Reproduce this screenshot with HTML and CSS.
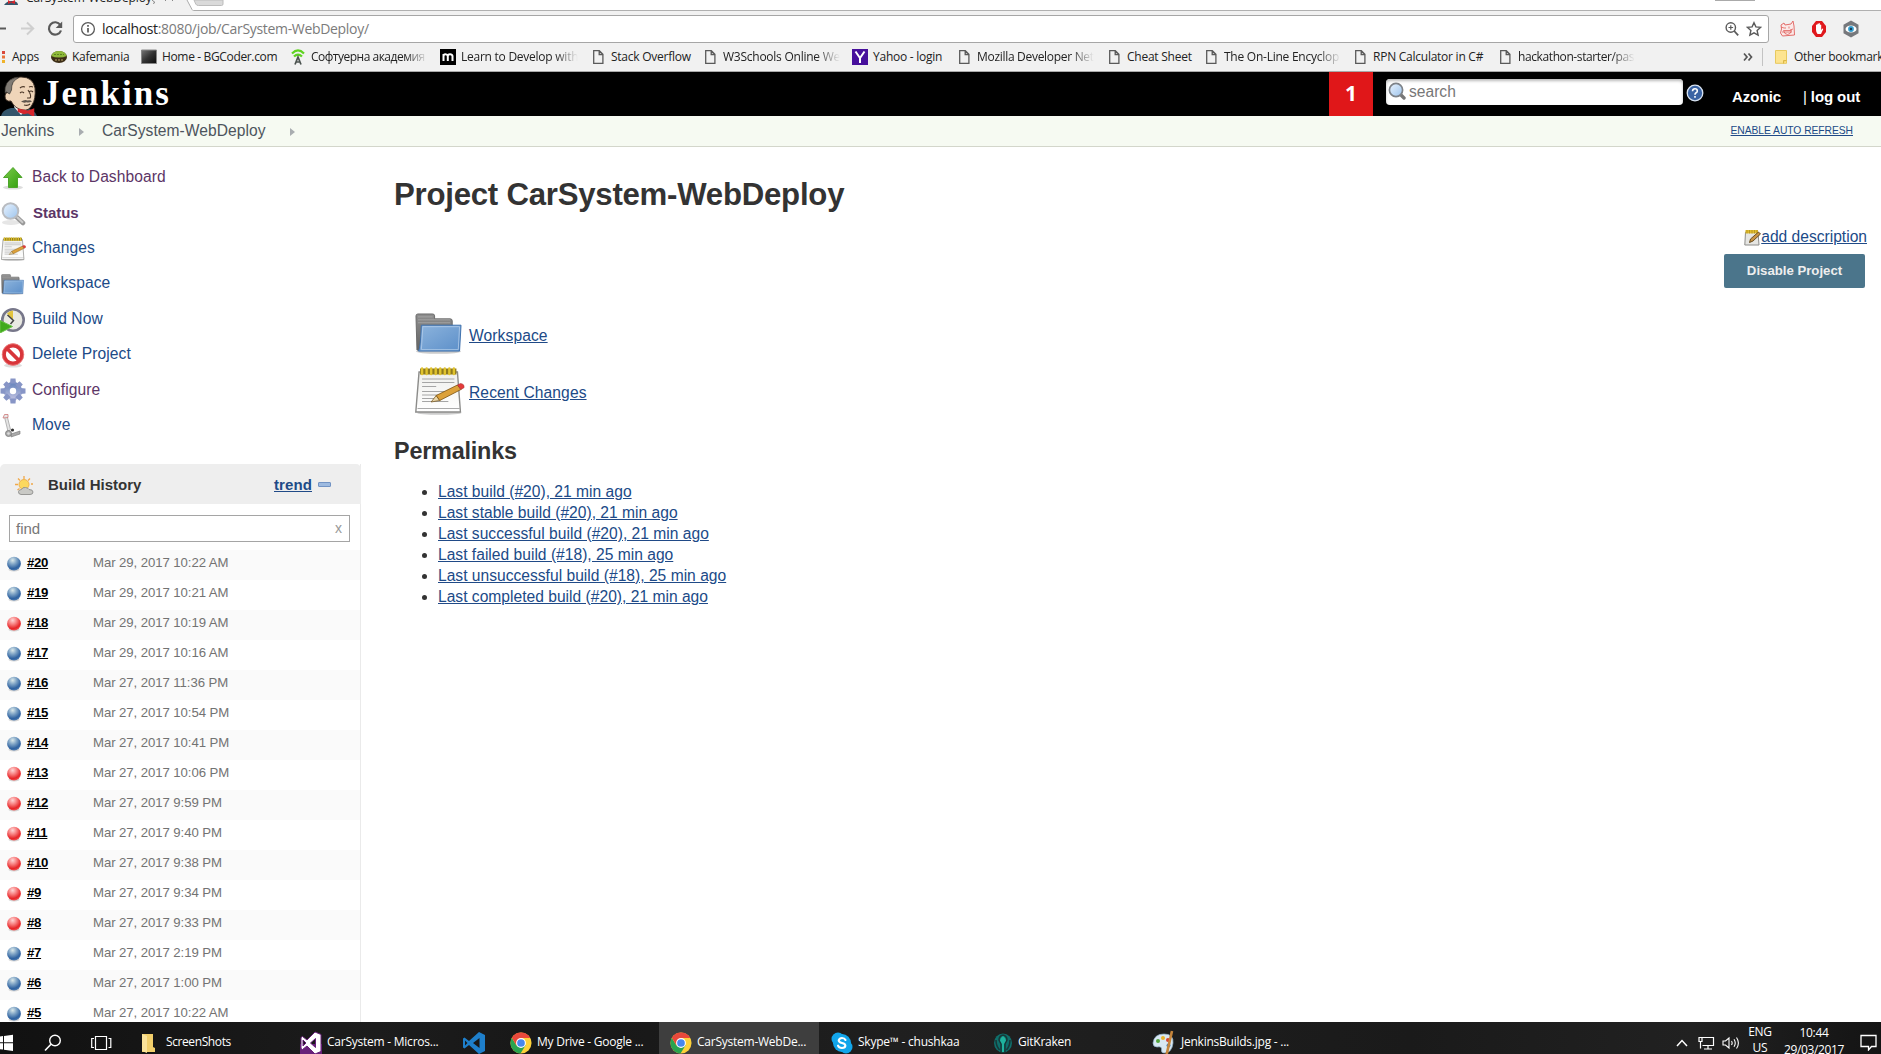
FILE: index.html
```html
<!DOCTYPE html>
<html lang="en">
<head>
<meta charset="utf-8">
<title>CarSystem-WebDeploy [Jenkins]</title>
<link rel="stylesheet" href="styles.css">
</head>
<body>
<svg class="defs" width="0" height="0" aria-hidden="true">
  <defs>
    <radialGradient id="gBlue" cx=".4" cy=".25" r=".75"><stop offset="0" stop-color="#dbe9ea"/><stop offset=".4" stop-color="#7ea3c5"/><stop offset=".8" stop-color="#2f62a0"/><stop offset="1" stop-color="#4a78ae"/></radialGradient>
    <radialGradient id="gRed" cx=".4" cy=".25" r=".75"><stop offset="0" stop-color="#ffd6d6"/><stop offset=".4" stop-color="#f78080"/><stop offset=".8" stop-color="#e62528"/><stop offset="1" stop-color="#ee5050"/></radialGradient>
    <linearGradient id="gFolder" x1="0" y1="0" x2="1" y2="1"><stop offset="0" stop-color="#8db4dd"/><stop offset="1" stop-color="#5c8fc9"/></linearGradient>
    <linearGradient id="gGray" x1="0" y1="0" x2="0" y2="1"><stop offset="0" stop-color="#8e8e8e"/><stop offset="1" stop-color="#636363"/></linearGradient>
    <linearGradient id="gGreen" x1="0" y1="0" x2="1" y2="1"><stop offset="0" stop-color="#7ccb4a"/><stop offset="1" stop-color="#2f9d0c"/></linearGradient>
    <linearGradient id="gLens" x1="0" y1="0" x2="1" y2="1"><stop offset="0" stop-color="#eaf4ff"/><stop offset="1" stop-color="#9cc3ec"/></linearGradient>
    <linearGradient id="gPaper" x1="0" y1="0" x2="0" y2="1"><stop offset="0" stop-color="#efefec"/><stop offset="1" stop-color="#fff"/></linearGradient>
    <linearGradient id="gGear" x1="0" y1="0" x2="0" y2="1"><stop offset="0" stop-color="#6f8ac0"/><stop offset="1" stop-color="#b4b9dc"/></linearGradient>
    <linearGradient id="gScreen" x1="0" y1="0" x2="1" y2="1"><stop offset="0" stop-color="#777"/><stop offset=".5" stop-color="#333"/><stop offset="1" stop-color="#0c0c0c"/></linearGradient>
    <symbol id="doc" viewBox="0 0 16 16"><path d="M3.7 1.7h5.6l3.6 3.6v9H3.7zM9.2 2v3.5h3.5" fill="none" stroke="#5a5a5a" stroke-width="1.3"/></symbol>
    <symbol id="ballBlue" viewBox="0 0 16 16"><ellipse cx="8" cy="13.6" rx="5.5" ry="1.8" fill="#bbb" opacity=".6"/><circle cx="8" cy="7.7" r="6.9" fill="url(#gBlue)"/></symbol>
    <symbol id="ballRed" viewBox="0 0 16 16"><ellipse cx="8" cy="13.6" rx="5.5" ry="1.8" fill="#bbb" opacity=".6"/><circle cx="8" cy="7.7" r="6.9" fill="url(#gRed)"/></symbol>
    <symbol id="folder" viewBox="0 0 48 42" preserveAspectRatio="none">
      <ellipse cx="24" cy="39.500" rx="23" ry="2.300" fill="#ccc"/>
      <path d="M1 3q0-2 2-2h15q2 0 2 2v3h16q2 0 2 2v30H2z" fill="url(#gGray)" stroke="#6a6a6a"/>
      <path d="M3 4h15M3 7h33M3 10h33" stroke="#aaa" stroke-width=".8"/>
      <path d="M6.500 12.500h40.500l-1.500 26.500h-42q2-2 3-26.500z" fill="url(#gFolder)" stroke="#3d70ac"/>
      <path d="M8 14h37.500l-1.300 23.500H6.500z" fill="none" stroke="#b3cdea" stroke-width=".8"/>
    </symbol>
    <symbol id="notepad" viewBox="0 0 49 48" preserveAspectRatio="none">
      <ellipse cx="24" cy="46" rx="22" ry="1.800" fill="#ccc"/>
      <path d="M4 5h38l3 40H.8z" fill="url(#gPaper)" stroke="#8c8c8a" stroke-width="1.4"/>
      <path d="M2.500 41.500h42" stroke="#aaa"/>
      <path d="M7 12h32M7 15.500h32M7 19.500h14M7 24.500h24M7 28h18M7 31.500h14M7 34.500h26" stroke="#a5a5a5"/>
      <path d="M5 4.500h36" stroke="#8f7a1c" stroke-width="6"/>
      <path d="M7 1.500v5.500M11.500 1.500v5.500M16 1.500v5.500M20.500 1.500v5.500M25 1.500v5.500M29.500 1.500v5.500M34 1.500v5.500M38.500 1.500v5.500" stroke="#e0c32e" stroke-width="2.400" stroke-linecap="round"/>
      <path d="M16 35l5-6.500 3.500 5z" fill="#ead6a8" stroke="#6b4a12" stroke-width=".7"/>
      <path d="M21 28.500l21-10.500 3.500 4.500-21 11z" fill="#dca13a" stroke="#7c5210" stroke-width=".8"/>
      <path d="M42 18l3-1.500q4 .5 3.800 4l-3.300 2z" fill="#e43b3b" stroke="#a33" stroke-width=".6"/>
    </symbol>
    <symbol id="chrome" viewBox="0 0 24 24">
      <circle cx="12" cy="12" r="11.500" fill="#fdd13a"/>
      <path d="M2 6.300A11.500 11.500 0 0 0 11.500 23.500L17 14.500 12 12 7 14.600z" fill="#2aa350"/>
      <path d="M12 6.500h10.100a11.500 11.500 0 0 0-20.100-.2L7 14.500 12 12z" fill="#e8483b"/>
      <circle cx="12" cy="12" r="5.400" fill="#fff"/><circle cx="12" cy="12" r="4.200" fill="#4787ee"/>
    </symbol>
    <symbol id="butler" viewBox="0 0 36 40">
      <path d="M0 40q1-6 10-8l15 0q9 2 11 8z" fill="#33566b"/>
      <path d="M13 31l7 8 7-7-2-5H14z" fill="#f4f4f4"/>
      <path d="M5 13Q6 1 20 1q12 0 14 11 1 11-3 17-3 6-9 5-8-1-12-9-6 1-6-5 0-3 3-4z" fill="#efd5b9" stroke="#3b2d22" stroke-width=".9"/>
      <path d="M4 17Q3 5 13 2q3-1 5-.5Q10 5 10.500 14l-2 4-3-2z" fill="#807b74" stroke="#33302c" stroke-width=".7"/>
      <path d="M19 17q2-2 4 0M28 16q2-2 4 0M19 12q2-2 5-1M28 11q2-1 4 0M27 14q4 6 2 8l-3 0M23 29q4 1 6-1" fill="none" stroke="#493526" stroke-width="1.100"/>
      <path d="M20 25.500q4-2.500 6.500-1 2.500-1 4.500 1-3 1.500-5.500.8-3 1-5.500-.8z" fill="#5e554d"/>
      <path d="M18 35l5 2 4-1 5 3v-5l-5 2-4-1-5-1z" fill="#d6262c" stroke="#d6262c" stroke-width="2.500"/>
    </symbol>
  </defs>
</svg>

<div class="tabs">
  <svg class="tab-shape" width="240" height="11" viewBox="0 0 240 11">
    <path d="M0 0H187l5 10H240V11H0z" fill="#f1f1f1"/>
    <path d="M187 0l5 9.500q.5 1 1.500 1H240" fill="none" stroke="#ababab"/>
    <path d="M194 0h29v4q0 1.500-1.500 1.500h-23q-2 0-2.800-1.500z" fill="#dadada" stroke="#bcbcbc"/>
    <path d="M4 5q3-4 7-4h3q4 1 4 4z" fill="#33566b"/><path d="M8 0l3 2 4-2v4l-4-1.500L8 4z" fill="#d6262c"/>
    <path d="M152 0l3 2.500-2 1M165 1l2-2M171-1l2 2" fill="none" stroke="#888"/>
  </svg>
  <span class="tab-title">CarSystem-WebDeploy</span>
  <i class="win-btn"></i>
</div>

<div class="toolbar">
  <svg class="nav-icons" width="73" height="30" viewBox="0 0 73 30">
    <path d="M0 14.500h6" stroke="#5a5a5a" stroke-width="2"/>
    <path d="M21 14.500h12M27 8.500l6.200 6-6.200 6" fill="none" stroke="#cfcfcf" stroke-width="2"/>
    <path d="M60.300 11A6.200 6.200 0 1 0 61 16.500" fill="none" stroke="#5a5a5a" stroke-width="2.200"/><path d="M62.200 7.500v6.500h-6.500z" fill="#5a5a5a"/>
  </svg>
  <div class="omnibox">
    <svg width="16" height="16" viewBox="0 0 16 16"><circle cx="8" cy="8" r="6.400" fill="none" stroke="#5a5a5a" stroke-width="1.300"/><path d="M8 7v4.500M8 4v1.800" stroke="#5a5a5a" stroke-width="1.700"/></svg>
    <span class="url"><b>localhost</b>:8080/job/CarSystem-WebDeploy/</span>
    <svg class="push" width="16" height="16" viewBox="0 0 16 16"><circle cx="6.800" cy="6.500" r="4.700" fill="none" stroke="#5a5a5a" stroke-width="1.400"/><path d="M4.500 6.500h4.600M6.800 4.200v4.600" stroke="#5a5a5a" stroke-width="1.200"/><path d="M10.200 10l4 4.300" stroke="#5a5a5a" stroke-width="1.800"/></svg>
    <svg class="star" width="16" height="16" viewBox="0 0 16 16"><path d="M8 1.700l1.900 4.200 4.600.5-3.400 3.100 1 4.600L8 11.800l-4.100 2.300 1-4.600L1.500 6.400l4.600-.5z" fill="none" stroke="#5a5a5a" stroke-width="1.400"/></svg>
  </div>
  <svg class="ext" width="17" height="18" viewBox="0 0 17 18"><path d="M2 5l3-2 1 2 6-1 2-3 1 5 .5 9-12 1-2-3 1-4z" fill="#fbe9e8" stroke="#e0605c" stroke-width=".9"/><path d="M6 7v2M10 6.500v2M4.500 10.500h8q-1 4-4 4t-4-4zM3 12l10 0M2 7l3 1M11 10l3-1" fill="none" stroke="#e0605c" stroke-width=".8"/></svg>
  <svg class="ext" width="16" height="18" viewBox="0 0 16 18"><path d="M5 1h6l4 5v6l-4 5H5l-4-5V6z" fill="#e0191d"/><path d="M5 8V5q.8-1 1.300 0V4q.8-1 1.300 0v-.5q.8-1 1.300 0V5q.8-1 1.300 0v5l1.300-1.500q1 0 .6 1L10 14H6.500Q5 12 5 10z" fill="#fff"/></svg>
  <svg class="ext" width="18" height="18" viewBox="0 0 18 18"><path d="M9 .5l7.500 4.300v8.400L9 17.500l-7.500-4.300V4.800z" fill="#76787c"/><ellipse cx="9" cy="9" rx="5.500" ry="3.600" fill="#fff"/><circle cx="9" cy="9" r="2.900" fill="#35a0d2"/><circle cx="9" cy="9" r="1.200" fill="#173a55"/></svg>
</div>

<div class="bookmarks">
  <span class="bm apps"><svg width="6" height="16" viewBox="0 0 6 16"><path d="M2 2h3v3H2z" fill="#d9483b"/><path d="M2 6.500h3v3H2z" fill="#e8733a"/><path d="M2 11h3v3H2z" fill="#efb32b"/></svg><span>Apps</span></span>
  <span class="bm"><svg width="16" height="16" viewBox="0 0 16 16"><ellipse cx="8" cy="8" rx="8" ry="6" fill="#3c2d16"/><path d="M.3 7Q2 2 8 2t7.700 5q-3 1.500-7.700 1.500T.3 7z" fill="#8fb93a"/><path d="M3 5.500h10" stroke="#5c8320" stroke-dasharray="2 1"/><path d="M4 11h8" stroke="#b9a66b" stroke-dasharray="2 1"/></svg><span>Kafemania</span></span>
  <span class="bm"><svg width="16" height="16" viewBox="0 0 16 16"><path d="M.5 1h15v13.500H.5z" fill="url(#gScreen)" stroke="#888"/></svg><span class="w-home">Home - BGCoder.com</span></span>
  <span class="bm"><svg width="16" height="16" viewBox="0 0 16 16"><path d="M2 4.500q6-6 12 0M4 7.500q4-4 8 0" fill="none" stroke="#5fd321" stroke-width="2.200"/><path d="M5 15.500l3-7.500 3 7.500M6 13h4" fill="none" stroke="#4c5350" stroke-width="1.700"/></svg><span class="fade w-soft">Софтуерна академия</span></span>
  <span class="bm"><svg width="16" height="16" viewBox="0 0 16 16"><path d="M0 0h16v16H0z"/><path d="M3.500 12V5M3.500 7q0-1.700 2-1.700T7.800 7v5M7.800 7q0-1.700 2.200-1.700T12.500 7v5" fill="none" stroke="#fff" stroke-width="2"/></svg><span class="fade">Learn to Develop with</span></span>
  <span class="bm"><svg width="16" height="16"><use href="#doc"/></svg><span>Stack Overflow</span></span>
  <span class="bm"><svg width="16" height="16"><use href="#doc"/></svg><span class="fade w-w3">W3Schools Online We</span></span>
  <span class="bm"><svg width="16" height="16" viewBox="0 0 16 16"><path d="M0 0h16v16H0z" fill="#47109c"/><path d="M3.500 2.500L8 9l4.500-6.500M8 9v5" fill="none" stroke="#fff" stroke-width="2"/></svg><span>Yahoo - login</span></span>
  <span class="bm"><svg width="16" height="16"><use href="#doc"/></svg><span class="fade w-moz">Mozilla Developer Net</span></span>
  <span class="bm"><svg width="16" height="16"><use href="#doc"/></svg><span>Cheat Sheet</span></span>
  <span class="bm"><svg width="16" height="16"><use href="#doc"/></svg><span class="fade">The On-Line Encyclop</span></span>
  <span class="bm"><svg width="16" height="16"><use href="#doc"/></svg><span>RPN Calculator in C#</span></span>
  <span class="bm"><svg width="16" height="16"><use href="#doc"/></svg><span class="fade w-hack">hackathon-starter/pas</span></span>
  <span class="more"><svg width="10" height="10" viewBox="0 0 10 10"><path d="M1 1.500L4 5 1 8.500M5.500 1.500l3 3.500-3 3.500" fill="none" stroke="#555" stroke-width="1.700"/></svg></span>
  <span class="bm other"><svg width="12" height="16" viewBox="0 0 12 16"><path d="M.5 1.500h11v12.800H.5z" fill="#fde490" stroke="#e8c95e"/><path d="M8.500 14.500v-3h3" fill="#f6d469" stroke="#dcb94a"/></svg><span>Other bookmarks</span></span>
</div>

<header class="jheader">
  <svg class="mascot" width="36" height="40"><use href="#butler"/></svg>
  <span class="brand">Jenkins</span>
  <span class="alert">1</span>
  <div class="search">
    <svg width="18" height="18" viewBox="0 0 18 18"><path d="M11.500 11.500l4.500 4.500" stroke="#777" stroke-width="3.400" stroke-linecap="round"/><circle cx="8" cy="8" r="6.600" fill="url(#gLens)" stroke="#7d8288" stroke-width="1.700"/></svg>
    <span>search</span>
  </div>
  <svg class="help" width="18" height="18" viewBox="0 0 18 18"><circle cx="9" cy="9" r="7.800" fill="#3b64a4" stroke="#d9e4f2" stroke-width="1.300"/><path d="M6.500 7.200Q6.700 4.800 9 4.800t2.300 2.100q0 1.200-1.200 1.900T9 10.700M9 12v1.700" fill="none" stroke="#fff" stroke-width="1.600"/></svg>
  <span class="user">Azonic</span>
  <span class="logout"><i>|</i> log out</span>
</header>

<nav class="crumbs">
  <span class="c1">Jenkins</span><i class="tri"></i><span class="c2">CarSystem-WebDeploy</span><i class="tri"></i>
  <a class="refresh">ENABLE AUTO REFRESH</a>
</nav>

<div class="page">
  <aside class="side">
    <ul class="tasks">
      <li class="visited"><svg width="26" height="26" viewBox="0 0 26 26"><ellipse cx="13" cy="22.500" rx="10" ry="2" fill="#ddd"/><path d="M13 2.500l9 10h-4.500v10h-9v-10H3.500z" fill="url(#gGreen)" stroke="#4da52a"/></svg>Back to Dashboard</li>
      <li class="current"><svg width="26" height="26" viewBox="0 0 26 26"><ellipse cx="11" cy="21.500" rx="9" ry="2.500" fill="#e6e6e6"/><path d="M16 15.500l7 6.500" stroke="#999" stroke-width="4.500" stroke-linecap="round"/><path d="M17 16l6 5.700" stroke="#ccc" stroke-width="2"/><circle cx="10.500" cy="10" r="7.800" fill="url(#gLens)" stroke="#b9bcc1" stroke-width="2"/></svg>Status</li>
      <li><svg width="26" height="26"><use href="#notepad" x="1" y="1" width="25" height="24"/></svg>Changes</li>
      <li><svg width="26" height="26"><use href="#folder" x="1" y="3" width="23" height="21"/></svg>Workspace</li>
      <li><svg width="26" height="26" viewBox="0 0 26 26"><circle cx="13" cy="13" r="10.700" fill="#e9e9e2" stroke="#77778a" stroke-width="2.600"/><path d="M13 13L7 6.500q3-3 6-3z" fill="#e2c43e"/><path d="M7.500 8l6 5.500-3 3.500" fill="none" stroke="#444" stroke-width="1.500"/><path d="M0 13.500l12.500 6L0 26z" fill="#40aa1c" stroke="#69c246"/></svg>Build Now</li>
      <li><svg width="26" height="26" viewBox="0 0 26 26"><ellipse cx="13" cy="23.500" rx="9" ry="2" fill="#ddd"/><circle cx="13" cy="12.500" r="9" fill="#fff" stroke="#d8353a" stroke-width="3.800"/><path d="M7 6.500l12 12" stroke="#d8353a" stroke-width="3.800"/><circle cx="13" cy="12.500" r="10.800" fill="none" stroke="#ee8080" stroke-width=".8"/></svg>Delete Project</li>
      <li class="visited"><svg width="26" height="26" viewBox="0 0 26 26"><circle cx="13" cy="13" r="6.200" fill="none" stroke="url(#gGear)" stroke-width="6"/><path d="M10.500 .5h5l.5 5h-6zM10.500 25.500h5l.5-5h-6zM.5 10.500v5l5 .5v-6zM25.500 10.500v5l-5 .5v-6zM3.200 6.600L6.400 3.200l4.400 3.600-4 4zM22.800 6.600L19.600 3.200l-4.400 3.600 4 4zM3.200 19.400L6.400 22.800l4.400-3.600-4-4zM22.800 19.400L19.600 22.800l-4.400-3.600 4-4z" fill="#8795c6"/></svg>Configure</li>
      <li><svg width="26" height="26" viewBox="0 0 26 26"><path d="M11 21l9-3v3l-9 3z" fill="#aaa" stroke="#777" stroke-width=".6"/><path d="M4.500 4l2.500-1.500 3.500 14-2.500 2z" fill="#e4e4e4" stroke="#999" stroke-width=".7"/><path d="M3 5l1.500-3.500L8 1.500v3z" fill="#e8eaea" stroke="#c77" stroke-width=".8"/><circle cx="8.500" cy="20.500" r="3" fill="#aaa" stroke="#777" stroke-width=".8"/><circle cx="8.500" cy="20.500" r="1.300" fill="#ddd"/><circle cx="12.500" cy="17" r="1.600" fill="#333"/></svg>Move</li>
    </ul>

    <section class="history">
      <header class="history-head">
        <svg width="20" height="20" viewBox="0 0 20 20"><path d="M9 0v3M3 2.500l2 2M15 2.500l-2 2M0 8.500h3M16 8h2M2.500 14l2-1.500" stroke="#f0a84a" stroke-width="1.300"/><circle cx="9" cy="8.500" r="5" fill="#fbd85e" stroke="#f0b24c"/><path d="M6 18.500q-3-.5-2.500-3 .5-2 3-2 1-2.500 4-2t3.500 2q4 0 4 2.500t-3 2.500z" fill="#c9c9c5" stroke="#8f8f8d" stroke-width=".9"/></svg>
        <b>Build History</b>
        <a>trend</a>
        <i class="collapse"></i>
      </header>
      <div class="find"><span>find</span><span class="clear">x</span></div>
      <ul class="builds">
        <li><svg width="16" height="16"><use href="#ballBlue"/></svg><a>#20</a><span>Mar 29, 2017 10:22 AM</span></li>
        <li><svg width="16" height="16"><use href="#ballBlue"/></svg><a>#19</a><span>Mar 29, 2017 10:21 AM</span></li>
        <li><svg width="16" height="16"><use href="#ballRed"/></svg><a>#18</a><span>Mar 29, 2017 10:19 AM</span></li>
        <li><svg width="16" height="16"><use href="#ballBlue"/></svg><a>#17</a><span>Mar 29, 2017 10:16 AM</span></li>
        <li><svg width="16" height="16"><use href="#ballBlue"/></svg><a>#16</a><span>Mar 27, 2017 11:36 PM</span></li>
        <li><svg width="16" height="16"><use href="#ballBlue"/></svg><a>#15</a><span>Mar 27, 2017 10:54 PM</span></li>
        <li><svg width="16" height="16"><use href="#ballBlue"/></svg><a>#14</a><span>Mar 27, 2017 10:41 PM</span></li>
        <li><svg width="16" height="16"><use href="#ballRed"/></svg><a>#13</a><span>Mar 27, 2017 10:06 PM</span></li>
        <li><svg width="16" height="16"><use href="#ballRed"/></svg><a>#12</a><span>Mar 27, 2017 9:59 PM</span></li>
        <li><svg width="16" height="16"><use href="#ballRed"/></svg><a>#11</a><span>Mar 27, 2017 9:40 PM</span></li>
        <li><svg width="16" height="16"><use href="#ballRed"/></svg><a>#10</a><span>Mar 27, 2017 9:38 PM</span></li>
        <li><svg width="16" height="16"><use href="#ballRed"/></svg><a>#9</a><span>Mar 27, 2017 9:34 PM</span></li>
        <li><svg width="16" height="16"><use href="#ballRed"/></svg><a>#8</a><span>Mar 27, 2017 9:33 PM</span></li>
        <li><svg width="16" height="16"><use href="#ballBlue"/></svg><a>#7</a><span>Mar 27, 2017 2:19 PM</span></li>
        <li><svg width="16" height="16"><use href="#ballBlue"/></svg><a>#6</a><span>Mar 27, 2017 1:00 PM</span></li>
        <li><svg width="16" height="16"><use href="#ballBlue"/></svg><a>#5</a><span>Mar 27, 2017 10:22 AM</span></li>
      </ul>
    </section>
  </aside>

  <main class="main">
    <h1>Project CarSystem-WebDeploy</h1>
    <div class="actions">
      <span class="describe"><svg width="17" height="17" viewBox="0 0 17 17"><path d="M1.500 3h12.500l1 13H.8z" fill="#e6e6e3" stroke="#8c8c8a"/><path d="M1.500 2.700h12.500" stroke="#e0bd2e" stroke-width="3.400"/><path d="M3 1v3.500M5.500 1v3.500M8 1v3.500M10.500 1v3.500M13 1v3.500" stroke="#a98a1c" stroke-width=".7"/><path d="M5.500 13.500l1-3.500 8-7 2 2-7.500 7z" fill="#c89445" stroke="#5f4418" stroke-width=".9"/></svg><a>add description</a></span>
      <button class="disable">Disable Project</button>
    </div>
    <div class="quick"><svg width="50" height="48"><use href="#folder" width="47" height="41" y="3"/></svg><a>Workspace</a></div>
    <div class="quick second"><svg width="50" height="48"><use href="#notepad" width="49.500" height="48"/></svg><a>Recent Changes</a></div>
    <h2>Permalinks</h2>
    <ul class="permalinks">
      <li><a>Last build (#20), 21 min ago</a></li>
      <li><a>Last stable build (#20), 21 min ago</a></li>
      <li><a>Last successful build (#20), 21 min ago</a></li>
      <li><a>Last failed build (#18), 25 min ago</a></li>
      <li><a>Last unsuccessful build (#18), 25 min ago</a></li>
      <li><a>Last completed build (#20), 21 min ago</a></li>
    </ul>
  </main>
</div>

<footer class="taskbar">
  <span class="tb"><svg width="14" height="18" viewBox="0 0 14 18"><path d="M0 2.500l3-.4v6.200H0zM4 2l9-1.300v7.600H4zM0 9.300h3v6.300l-3-.4zM4 9.300h9V17l-9-1.300z" fill="#fff"/></svg></span>
  <span class="tb"><svg width="18" height="18" viewBox="0 0 18 18"><circle cx="11" cy="6.500" r="5.300" fill="none" stroke="#fff" stroke-width="1.400"/><path d="M7 10.300L1 16.500" stroke="#fff" stroke-width="1.600"/></svg></span>
  <span class="tb"><svg width="21" height="16" viewBox="0 0 21 16"><path d="M4.500 1.500h11v13h-11zM3 3.500H.7v9H3M17.500 3.500h2.300v9h-2.300" fill="none" stroke="#fff" stroke-width="1.200"/></svg></span>
  <span class="tb"><svg width="15" height="20" viewBox="0 0 15 20"><path d="M1 1h11v13l2 1v4H1z" fill="#f2cf6b"/><path d="M1 1l5 2v17l-5-2z" fill="#fbe39a"/></svg><span class="l-ss">ScreenShots</span></span>
  <span class="tb"><svg width="22" height="24" viewBox="0 0 22 24"><path d="M0 13h22v11H0z" fill="#68217a"/><path d="M15 1l6 2.500v17L15 23l-8-8-4.500 3.500L1 17.500v-11L2.500 5.500 7 9zM15.500 7.500L10.500 12l5 4.500zM3 9v6l3-3z" fill="#fff" stroke="#68217a" stroke-width="1" fill-rule="evenodd"/></svg><span>CarSystem - Micros...</span></span>
  <span class="tb"><svg width="24" height="24" viewBox="0 0 24 24"><path d="M17 1l6 3v16l-6 3-10-9-4.500 3.500L1 16.500v-9L2.500 6.500 7 10zM17.500 7l-6.500 5 6.500 5zM3 9.500v5L5.500 12z" fill="#1e7fcb" fill-rule="evenodd"/></svg></span>
  <span class="tb"><svg width="22" height="22"><use href="#chrome"/></svg><span>My Drive - Google ...</span></span>
  <span class="tb active"><svg width="22" height="22"><use href="#chrome"/></svg><span>CarSystem-WebDe...</span></span>
  <span class="tb"><svg width="22" height="22" viewBox="0 0 22 22"><circle cx="7" cy="7" r="6.500" fill="#12a5ea"/><circle cx="15" cy="15" r="6.500" fill="#12a5ea"/><circle cx="11" cy="11" r="9" fill="#12a5ea"/><path d="M14.500 8Q13.500 6 11 6T7.700 8.300q0 2 3.300 2.700t3.400 2.700Q14.200 16 11 16t-4-2.300" fill="none" stroke="#fff" stroke-width="2.100" stroke-linecap="round"/></svg><span>Skype™ - chushkaa</span></span>
  <span class="tb"><svg width="20" height="22" viewBox="0 0 20 22"><ellipse cx="10" cy="11" rx="9" ry="9.500" fill="#0f6f6b"/><path d="M10 3q4 1 4 5l-2 4v8M10 3Q6 4 6 8l2 4v8M3 8q0 6 3.500 10M17 8q0 6-3.500 10" fill="none" stroke="#173838" stroke-width="1.500"/><path d="M10 4q3 2 3 4.500L11 12v8H9v-8L7 8.500Q7 6 10 4z" fill="#1fb39e"/></svg><span>GitKraken</span></span>
  <span class="tb"><svg width="24" height="26" viewBox="0 0 24 26"><path d="M12 4q10 0 9 9-1 10-9 10-3 0-2.500-3.500T5 17q-4 0-4-4 1-9 11-9z" fill="#d9e8f3" stroke="#8fb1c9" stroke-width=".7"/><circle cx="6" cy="11" r="2" fill="#52a43c"/><circle cx="11" cy="8" r="2" fill="#e9b52d"/><circle cx="16" cy="10" r="2" fill="#d64334"/><circle cx="16.500" cy="15.500" r="2" fill="#3778c0"/><path d="M20 1l-5.500 24" stroke="#c6853b" stroke-width="2.600"/></svg><span>JenkinsBuilds.jpg - ...</span></span>
  <span class="tb tray">
    <svg width="12" height="8" viewBox="0 0 12 8"><path d="M1 7l5-5.500L11 7" fill="none" stroke="#fff" stroke-width="1.500"/></svg>
    <svg width="17" height="14" viewBox="0 0 17 14"><path d="M4.500 1.500h11v8h-11M10 9.500V13M6 13h8M1 1.500h3v4H1zM2.500 5.500v7" fill="none" stroke="#fff" stroke-width="1.200"/></svg>
    <svg class="speaker" width="18" height="14" viewBox="0 0 18 14"><path d="M1 5h2.500L7 2v10L3.500 9H1zM9.500 5q1.300 2 0 4M12 3.200q2.500 3.800 0 7.600M14.500 1.500q3.800 5.500 0 11" fill="none" stroke="#fff" stroke-width="1.100"/></svg>
  </span>
  <span class="two-line lang"><span>ENG</span><span>US</span></span>
  <span class="two-line clock"><span>10:44</span><span>29/03/2017</span></span>
  <span class="tb note"><svg width="17" height="17" viewBox="0 0 17 17"><path d="M1 1.500h15v11h-4.500L8.500 16v-3.500H1z" fill="none" stroke="#fff" stroke-width="1.300"/></svg></span>
</footer>
</body>
</html>
```
FILE: styles.css
```css
* { box-sizing: border-box; }
body {
  margin: 0;
  width: 1881px;
  height: 1054px;
  overflow: hidden;
  display: flex;
  flex-direction: column;
  background: #fff;
  color: #333;
  font: 15.6px/21px "Liberation Sans", Arial, sans-serif;
}
ul { margin: 0; padding: 0; list-style: none; }
svg { display: block; flex: none; }
.defs { position: absolute; }

/* Browser chrome */
.tabs {
  position: relative;
  flex: none;
  height: 11px;
  overflow: hidden;
  background: linear-gradient(#b0b0b0, #b0b0b0) 200px 10px / 100% 1px no-repeat, #fff;
}
.tab-title {
  position: absolute;
  left: 26px;
  top: -10px;
  font: 12px/16px "Open Sans", sans-serif;
  letter-spacing: -.1px;
  color: #222;
}
.win-btn { position: absolute; left: 1715px; top: 0; width: 40px; height: 1px; background: #aaa; }
.toolbar {
  flex: none;
  height: 34px;
  padding-top: 4px;
  display: flex;
  background: #f1f1f1;
}
.nav-icons { margin-top: -1px; }
.omnibox {
  width: 1696px;
  height: 28px;
  padding: 0 6px;
  display: flex;
  align-items: center;
  border: 1px solid #a6a6a6;
  border-radius: 3px;
  background: #fff;
}
.url {
  margin-left: 6px;
  font: 14px/20px "Open Sans", "Noto Sans", sans-serif;
  letter-spacing: -.32px;
  color: #7b7b7b;
}
.url b { font-weight: 400; color: #222; }
.push { margin-left: auto; }
.star { margin-left: 6px; }
.ext { margin: 5px 0 0 10px; }
.ext + .ext { margin-left: 15px; }

.bookmarks {
  flex: none;
  height: 27px;
  padding-bottom: 3px;
  display: grid;
  grid-template-columns: 51px 90px 149px 150px 150px 112px 150px 104px 150px 97px 149px 145px 246px 19px 1fr;
  align-items: center;
  background: #f1f1f1;
  border-bottom: 1px solid #a9a9a9;
  font: 12px/18px "Open Sans", "Noto Sans", sans-serif;
  letter-spacing: -.25px;
  color: #222;
  white-space: nowrap;
}
.bm { display: flex; align-items: center; gap: 5px; }
.apps { gap: 6px; }
.fade {
  width: 117px;
  -webkit-mask-image: linear-gradient(90deg, #000 80%, transparent);
  mask-image: linear-gradient(90deg, #000 80%, transparent);
}
.w-home { letter-spacing: -.35px; }
.w-soft { letter-spacing: -.5px; }
.w-moz { letter-spacing: -.3px; }
.w-hack { letter-spacing: -.4px; }
.other { gap: 7px; padding-left: 12px; border-left: 1px solid #c3c3c3; }

/* Jenkins header */
.jheader {
  flex: none;
  height: 44px;
  display: flex;
  background: #000;
  color: #fff;
}
.mascot { margin-top: 4px; margin-left: 1px; }
.brand {
  width: 1292px;
  padding-left: 5px;
  font: bold 35px/43px "Liberation Serif", serif;
  letter-spacing: 2px;
}
.alert {
  width: 44px;
  background: #e01719;
  text-align: center;
  font: bold 21px/43px "Open Sans", sans-serif;
}
.search {
  width: 297px;
  height: 26px;
  margin: 7px 0 0 13px;
  padding: 0 0 2px 2px;
  display: flex;
  align-items: center;
  gap: 3px;
  border-radius: 4px;
  background: #fff;
  box-shadow: inset 0 2px 3px #bbb;
  color: #777;
}
.help { margin: 12px 0 0 3px; }
.user, .logout { font-weight: bold; font-size: 15px; line-height: 50px; }
.user { margin-left: 28px; width: 71px; }
.logout { letter-spacing: -.1px; }
.logout i { font-style: normal; font-weight: 400; }

.crumbs {
  flex: none;
  height: 31px;
  padding: 0 28px 2px 1px;
  display: flex;
  align-items: center;
  background: #f6faf2;
  border-bottom: 1px solid #d3d6cb;
  color: #4d545d;
  letter-spacing: .05px;
}
.tri { border: 4px solid transparent; border-left: 5px solid #a9adb0; border-right: 0; margin-top: 4px; }
.c1 { width: 78px; }
.c2 { margin-left: 18px; width: 188px; }
.refresh { margin-left: auto; font-size: 10.3px; letter-spacing: -.05px; }

a { color: #204a87; text-decoration: underline; }

/* Page */
.page { flex: 1; min-height: 0; overflow: hidden; display: flex; }
.side { width: 361px; flex: none; }
.tasks { padding-top: 12px; height: 317px; color: #204a87; letter-spacing: .06px; }
.tasks li { display: flex; align-items: center; gap: 6px; height: 35.4px; }
.tasks svg { margin-top: 3px; }
.tasks .visited, .tasks .current { color: #5c3566; }
.tasks .current { font-weight: bold; font-size: 15px; gap: 7px; letter-spacing: -.05px; }

.history { border-right: 1px solid #eaeaea; }
.history-head {
  height: 40px;
  margin-right: -1px;
  padding-left: 15px;
  display: flex;
  align-items: center;
  border-radius: 5px 5px 0 0;
  background: #eee;
  font-size: 15px;
}
.history-head svg { margin-top: 4px; }
.history-head b { margin-left: 13px; width: 226px; }
.history-head a { font-weight: bold; letter-spacing: .1px; }
.collapse { width: 13px; height: 5px; margin: 1px 0 0 6px; border: 1px solid #7193c4; border-radius: 1px; background: #9dbae0; }
.find {
  width: 341px;
  height: 27px;
  margin: 11px 0 8px 9px;
  padding: 0 7px 0 6px;
  display: flex;
  align-items: center;
  justify-content: space-between;
  border: 1px solid #a5a5a5;
  font-size: 15px;
  color: #777;
}
.clear { font-size: 14px; color: #999; }
.builds li {
  height: 30px;
  padding: 0 0 6px 6px;
  display: flex;
  align-items: center;
  font-size: 13.2px;
  color: #737373;
  letter-spacing: -.08px;
}
.builds li:nth-child(odd) { background: #fafafa; }
.builds svg { margin-top: 4px; }
.builds a { margin-left: 5px; width: 66px; font-weight: bold; color: #000; letter-spacing: -.3px; }

.main { flex: 1; padding-left: 33px; }
h1 { margin: 28px 0 0; font-size: 31.2px; line-height: 40px; letter-spacing: -.25px; }
.actions { display: flex; flex-direction: column; align-items: flex-end; height: 91px; padding-top: 11px; }
.describe { display: flex; align-items: center; padding-right: 14px; height: 21px; }
.describe svg { margin-top: 2px; }
.disable {
  width: 141px;
  height: 34px;
  margin: 7px 16px 0 0;
  padding: 0 0 2px;
  border: 0;
  border-radius: 2px;
  background: #4b758b;
  color: #eee;
  font: bold 13.2px "Liberation Sans", Arial, sans-serif;
}
.quick { display: flex; align-items: center; gap: 4px; height: 48px; margin: 4px 0 0 21px; letter-spacing: .1px; }
.quick a { padding-top: 2px; }
.second { margin-top: 9px; }
h2 { margin: 20px 0 0; font-size: 23.4px; line-height: 32px; letter-spacing: -.2px; }
.permalinks { margin: 14px 0 0 44px; list-style: disc; letter-spacing: .01px; }

/* Taskbar */
.taskbar {
  flex: none;
  height: 32px;
  display: grid;
  grid-template-columns: 44px 47px 50px 159px 162px 48px 149px 172px 162px 159px 524px 72px 24px 84px 1fr;
  overflow: hidden;
  background: linear-gradient(90deg, #111, #1c1c1c 20%, #171717 30%, #202020 50%, #1a1a1a 75%, #212121 90%, #141414);
  color: #fff;
  font: 12px/17px "Open Sans", "Noto Sans", sans-serif;
  letter-spacing: -.24px;
  white-space: nowrap;
}
.tb { display: flex; align-items: center; gap: 5px; padding-top: 5px; }
.tb span { margin-top: -2px; }
.l-ss { margin-left: 5px; letter-spacing: -.4px; }
.active { background: #3e3e3e; margin-right: 12px; padding-left: 11px; }
.tray { gap: 10px; }
.speaker { margin-left: -3px; }
.two-line { display: flex; flex-direction: column; align-items: center; padding-top: 2px; }
.lang { line-height: 16px; }
.clock { letter-spacing: -.35px; }
.note { padding-left: 4px; }
```
